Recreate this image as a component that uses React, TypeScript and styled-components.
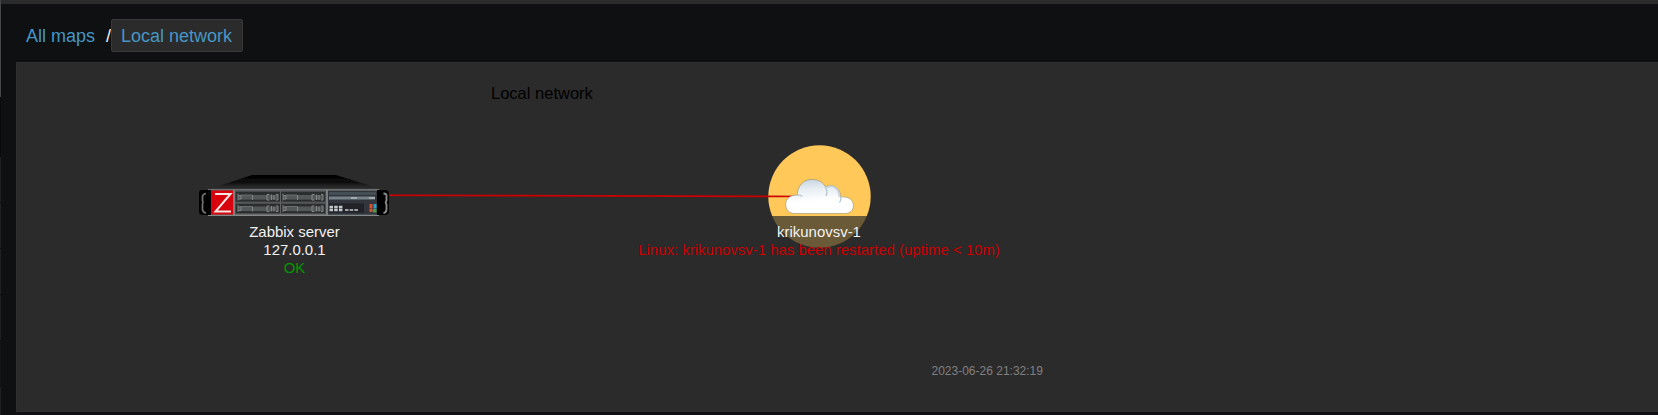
import React from 'react';
import styled, { createGlobalStyle } from 'styled-components';

const GlobalStyle = createGlobalStyle`
  * { box-sizing: border-box; }
  body { margin: 0; background: #0e1012; font-family: "Liberation Sans", Arial, sans-serif; overflow: hidden; }
`;

const Page = styled.div`
  display: flex;
  height: 415px;
  background: #0e1012;
`;

const SidebarEdge = styled.div`
  display: flex;
  flex-direction: column;
  width: 1px;
`;

const EdgePiece = styled.div<{ $height: number; $color: string }>`
  height: ${p => p.$height}px;
  background: ${p => p.$color};
`;

const Main = styled.main`
  flex: 1;
  min-width: 0;
  border-top: 4px solid #2b2b2b;
`;

const Breadcrumbs = styled.nav`
  display: flex;
  align-items: flex-start;
  height: 58px;
  padding: 15px 0 0 15px;
  font-size: 18px;
  line-height: 31px;
`;

const Crumb = styled.a`
  padding: 2px 10px 0;
  color: #4796c4;
`;

const Separator = styled.span`
  padding: 2px 0 0 1px;
  width: 6px;
  color: #f2f2f2;
`;

const CurrentCrumb = styled(Crumb)`
  width: 132px;
  height: 33px;
  padding: 1px 0 0 9px;
  background: #2b2b2b;
  border: 1px solid #383838;
  border-radius: 2px;
`;

const MapCanvas = styled.section`
  position: relative;
  height: 350px;
  margin-left: 15px;
  background: #2b2b2b;
  border: 1px solid #303030;
  border-right: 0;
`;

const Drawing = styled.svg`
  position: absolute;
  left: -1px;
  top: -1px;
  display: block;
`;

const MapText = styled.div<{ $x: number; $y: number; $size: number; $color: string }>`
  position: absolute;
  left: ${p => p.$x}px;
  top: ${p => p.$y}px;
  font-size: ${p => p.$size}px;
  line-height: 18px;
  color: ${p => p.$color};
  white-space: nowrap;
`;

const NodeLabel = styled.div<{ $x: number; $y: number }>`
  position: absolute;
  left: ${p => p.$x}px;
  top: ${p => p.$y}px;
  transform: translateX(-50%);
  text-align: center;
  font-size: 14.95px;
  line-height: 18px;
  color: #f2f2f2;
  white-space: nowrap;
`;

const Status = styled.div<{ $ok?: boolean }>`
  color: ${p => (p.$ok ? '#009900' : '#c80000')};
`;

const edge: [number, string][] = [
  [97, '#444648'], [60, '#090a0b'], [45, '#1f2022'], [1, '#090a0b'], [45, '#1f2022'], [1, '#090a0b'],
  [45, '#1f2022'], [1, '#090a0b'], [45, '#1f2022'], [1, '#090a0b'], [45, '#141516'], [1, '#090a0b'], [28, '#1f2022'],
];

const DriveBay = ({ x, y }: { x: number; y: number }) => (
  <g transform={`translate(${x} ${y})`}>
    <rect width="44" height="9.5" fill="#2b2d2d" />
    <rect x="2" y="3" width="40" height="4.6" fill="#555858" />
    <path d="M2 1.5v7M2.500 3.500h2.500v3.500H2.500M16.500 3v5" stroke="#838686" strokeWidth="1" fill="none" />
    <rect x="5" y="2.500" width="11" height="1" fill="#6b6e6e" />
    <path d="M33.500 2.500h-2.500v5.500h2.500M35.500 2.500v5.500M38 3v5M40 2.500h2v5.500h-2" stroke="#858888" strokeWidth="1" fill="none" />
  </g>
);

const Server = () => (
  <g filter="url(#soften)">
    <path d="M207 190L252 175H336L384 190Z" fill="url(#lid)" />
    <rect x="210" y="189" width="168" height="26.5" fill="#4b4e4e" />
    <path d="M208 189.7H379" stroke="#6d7070" strokeWidth="1.6" />
    <path d="M208 215.2H379" stroke="#858888" strokeWidth="1.5" />
    <path d="M199 193q0-3 3-3h9v25h-8q-4 0-4-3z" fill="#060606" />
    <path d="M206 193.500q-3 .5-3.500 3v4q1 2 0 4v5q.5 3 3.500 3.500" fill="none" stroke="#707272" strokeWidth="1.7" />
    <rect x="211.500" y="190.500" width="21.500" height="24" fill="#d80508" />
    <path d="M215 194H230.500L215.500 211.500H231" fill="none" stroke="#f4e6e6" strokeWidth="2" />
    <path d="M234 190v25M327 190v25" stroke="#8e9191" strokeWidth="1.400" />
    <DriveBay x={236} y={192} />
    <DriveBay x={281} y={192} />
    <DriveBay x={236} y={203.500} />
    <DriveBay x={281} y={203.500} />
    <path d="M235 203H326M280.500 191v24" stroke="#606363" strokeWidth="1" />
    <rect x="328" y="191" width="49" height="23.500" fill="#30353b" />
    <rect x="329" y="192" width="47" height="3" fill="#454d54" />
    <rect x="329" y="196.500" width="46" height="3" fill="#77818a" />
    <path d="M351 198h6M369 198h6" stroke="#a4abb0" strokeWidth="2" />
    <rect x="329" y="203.500" width="35" height="9" fill="#202428" />
    <path d="M329.500 207h14M329.500 210h14" stroke="#c5c8ca" strokeWidth="2.300" strokeDasharray="3.500 1.200" />
    <path d="M345 210h13" stroke="#a0a4a7" strokeWidth="2" strokeDasharray="3.500 1.200" />
    <rect x="369.500" y="204" width="3" height="4.500" fill="#dc4b2c" />
    <rect x="369.500" y="209" width="3" height="3" fill="#c95b30" />
    <rect x="373.500" y="204" width="3" height="4.500" fill="#27a4cf" />
    <rect x="373" y="209" width="3.500" height="3.500" fill="#4a9b44" />
    <path d="M377 190h8q4 0 4 4v17q0 4-4 4h-8z" fill="#050505" />
    <path d="M383.500 193.500q3.500 0 3 3v4q-1.500 2 0 4v5q0 3-3 3.500" fill="none" stroke="#8a8c8c" strokeWidth="1.800" />
  </g>
);

const Cloud = () => (
  <g>
    <path
      d="M794.500 213.500C789 213.500 785.700 209.500 785.700 204.500C785.700 199 790 194.800 797.300 195C797.300 186 803.500 179.400 811.700 179.400C818.500 179.400 823.500 182.500 825.500 187C832 183 840.500 187.500 840.700 197C848.500 196 853.400 200 853.400 205.500C853.400 210.500 850 213.500 844.500 213.500Z"
      fill="url(#cloud)" stroke="#94906f" strokeOpacity="0.6" strokeWidth="1"
    />
    <path d="M797 195.300Q800 194.700 802.500 196.500M825.500 187.200Q828 192 826 196M840.700 197Q841.500 200 839.500 202.500" fill="none" stroke="#b9c9d3" strokeWidth="1.400" />
    <path d="M827 187.500C833 184.500 839 188.500 839.500 197" fill="none" stroke="#c6d5de" strokeWidth="1.800" />
  </g>
);

export default function App() {
  return (
    <>
      <GlobalStyle />
      <Page>
        <SidebarEdge>
          {edge.map(([height, color], i) => <EdgePiece key={i} $height={height} $color={color} />)}
        </SidebarEdge>
        <Main>
          <Breadcrumbs>
            <Crumb>All maps</Crumb>
            <Separator>/</Separator>
            <CurrentCrumb>Local network</CurrentCrumb>
          </Breadcrumbs>
          <MapCanvas>
            <Drawing width="1642" height="350" viewBox="16 62 1642 350">
              <defs>
                <linearGradient id="lid" x1="0" y1="0" x2="0" y2="1">
                  <stop offset="0" stopColor="#000" />
                  <stop offset="0.450" stopColor="#0c0c0c" />
                  <stop offset="1" stopColor="#3a3a3a" />
                </linearGradient>
                <linearGradient id="cloud" x1="0.200" y1="0" x2="0.350" y2="1">
                  <stop offset="0" stopColor="#c4d3de" />
                  <stop offset="0.300" stopColor="#e6edf2" />
                  <stop offset="0.650" stopColor="#fff" />
                </linearGradient>
                <filter id="soften">
                  <feGaussianBlur stdDeviation="0.45" />
                </filter>
                <clipPath id="disc">
                  <circle cx="819.500" cy="196.500" r="51.700" />
                </clipPath>
              </defs>
              <circle cx="819.500" cy="196.500" r="51.200" fill="#ffc859" />
              <path d="M294 195L819 196.500" stroke="#cc0000" strokeWidth="1.700" />
              <Server />
              <Cloud />
              <rect x="637" y="216" width="365" height="36" fill="#2b2b2b" fillOpacity="0.700" clipPath="url(#disc)" />
            </Drawing>
            <MapText $x={474} $y={21} $size={16.5} $color="#000">Local network</MapText>
            <NodeLabel $x={277.500} $y={160}>
              <div>Zabbix server</div>
              <div>127.0.0.1</div>
              <Status $ok>OK</Status>
            </NodeLabel>
            <NodeLabel $x={802} $y={160}>
              <div>krikunovsv-1</div>
              <Status>Linux: krikunovsv-1 has been restarted (uptime &lt; 10m)</Status>
            </NodeLabel>
            <MapText $x={914.5} $y={299} $size={12} $color="#808080">2023-06-26 21:32:19</MapText>
          </MapCanvas>
        </Main>
      </Page>
    </>
  );
}
